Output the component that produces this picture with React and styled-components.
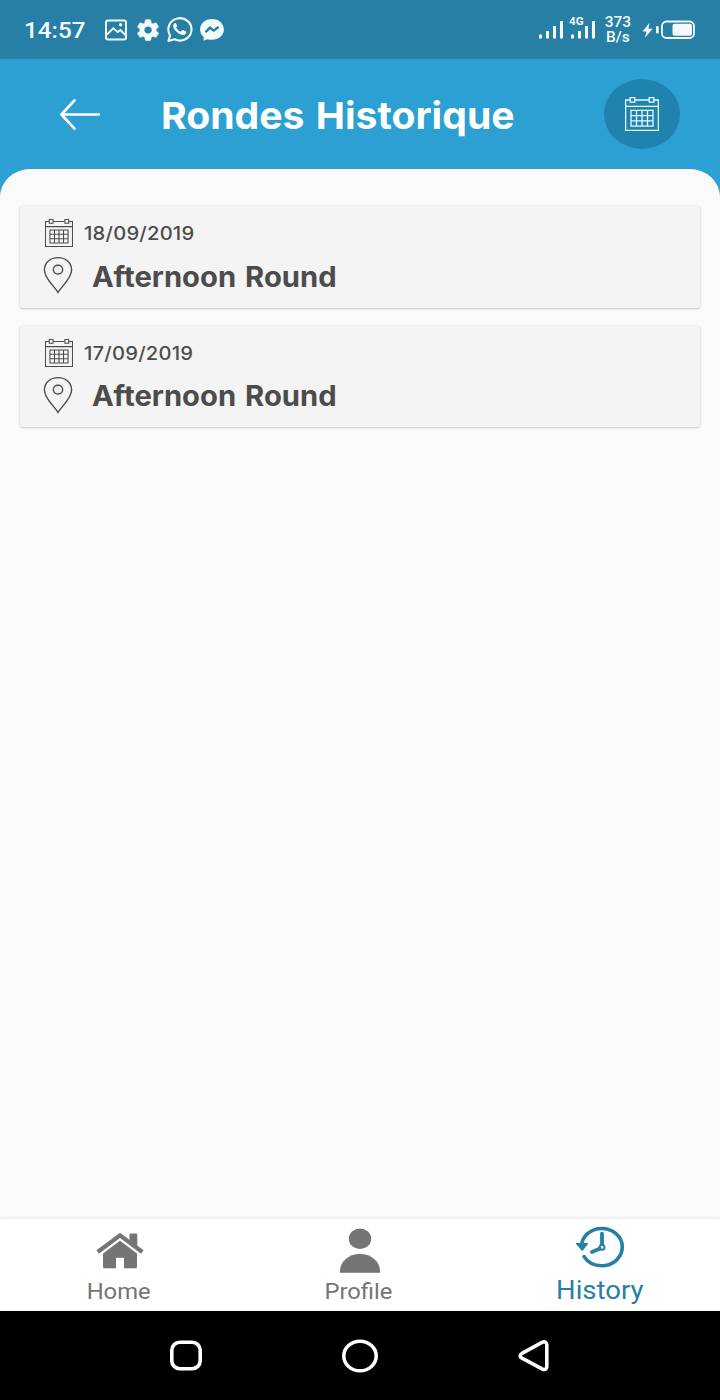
import React from "react";
import styled, { createGlobalStyle } from "styled-components";

const GlobalStyle = createGlobalStyle`
  * {
    box-sizing: border-box;
  }
  body {
    margin: 0;
    background: #000;
  }
  svg {
    display: block;
    flex: none;
  }
`;

const Screen = styled.div`
  width: 720px;
  height: 1400px;
  display: flex;
  flex-direction: column;
  overflow: hidden;
  background: #2c9fd3;
  font-family: Inter, "Liberation Sans", sans-serif;
`;

const StatusBar = styled.div`
  height: 59px;
  flex: none;
  display: flex;
  align-items: center;
  justify-content: space-between;
  padding: 0 24px 0 24px;
  background: #277fa6;
  color: #f4fbfd;
  font-family: Roboto, sans-serif;
`;

const StatusGroup = styled.div`
  display: flex;
  align-items: center;
`;

const Wide = styled.span`
  display: inline-block;
  white-space: nowrap;
  transform: scaleX(${(p) => p.$x || 1});
  transform-origin: ${(p) => p.$origin || "left"} center;
`;

const Clock = styled.div`
  width: 80px;
  font-size: 22px;
  font-weight: 500;
  line-height: 28px;
  padding-top: 2px;
`;

const Speed = styled.div`
  width: 28px;
  margin: 1px 10px 0 9px;
  text-align: center;
  font-size: 14px;
  font-weight: 500;
  line-height: 15px;
`;

const Header = styled.header`
  height: 110px;
  flex: none;
  display: flex;
  align-items: center;
  padding: 0 40px 0 58px;
`;

const Title = styled.h1`
  flex: 1;
  margin: 0;
  padding: 3px 0 0 59px;
  color: #fff;
  font-size: 37.5px;
  font-weight: 700;
  line-height: 46px;
  word-spacing: 2px;
`;

const RoundButton = styled.button`
  width: 76px;
  height: 70px;
  padding: 0;
  border: none;
  border-radius: 50%;
  display: flex;
  align-items: center;
  justify-content: center;
  background: #2083af;
  color: #e9fbff;
`;

const Sheet = styled.main`
  flex: 1;
  display: flex;
  flex-direction: column;
  gap: 18px;
  padding: 37px 20px 0;
  background: #fafafa;
  border-radius: 30px 30px 0 0 / 28px 28px 0 0;
`;

const Card = styled.article`
  height: 101.5px;
  padding: 12px 23px 0;
  border-radius: 3px;
  background: #f4f4f4;
  box-shadow: 0 1px 2px rgba(0, 0, 0, 0.14), 0 0 3px rgba(0, 0, 0, 0.12);
  color: #4c4c4c;
`;

const CardRow = styled.div`
  display: flex;
  align-items: center;
  height: ${(p) => p.$height};
`;

const CardCalendar = styled.div`
  padding-left: 2px;
`;

const DateText = styled.div`
  margin-left: 11px;
  font-size: 18.5px;
  font-weight: 500;
  letter-spacing: 0.2px;
  line-height: 28px;
`;

const RoundName = styled.div`
  margin-left: 19px;
  padding-top: 3px;
  font-size: 28px;
  font-weight: 700;
  line-height: 34px;
  word-spacing: 2px;
`;

const TabBar = styled.nav`
  height: 92px;
  flex: none;
  display: grid;
  grid-template-columns: repeat(3, 1fr);
  background: #fff;
  box-shadow: 0 -1px 3px rgba(0, 0, 0, 0.08);
  font-family: Roboto, sans-serif;
`;

const Tab = styled.div`
  display: flex;
  flex-direction: column;
  align-items: center;
  padding-top: 6px;
  color: ${(p) => (p.$active ? "#277fa6" : "#757575")};
`;

const TabLabel = styled.div`
  font-size: ${(p) => (p.$active ? "25px" : "22px")};
  line-height: 30px;
  margin-top: ${(p) => (p.$active ? "5px" : "4px")};
  margin-right: ${(p) => (p.$active ? "0" : "2.5px")};
`;

const SystemBar = styled.div`
  height: 89px;
  flex: none;
  display: grid;
  grid-template-columns: repeat(3, 174px);
  justify-content: center;
  justify-items: center;
  align-items: center;
  background: #000;
`;

function CalendarIcon({ width, height, stroke }) {
  return (
    <svg
      width={width}
      height={height}
      viewBox="0 0 34 34"
      preserveAspectRatio="none"
      fill="none"
      stroke="currentColor"
      strokeWidth={stroke}
    >
      <path d="M5 3H.6v30.4h32.8V3H29M10 3h14M.6 9.3h32.8" />
      <path d="M5.2.6h4.6v4.6H5.2zM24.2.6h4.6v4.6h-4.6z" />
      <path d="M6 13.3h22v15.9H6zM6 18.6h22M6 23.9h22M11.5 13.3v15.9M17 13.3v15.9M22.5 13.3v15.9" />
    </svg>
  );
}

function PinIcon() {
  return (
    <svg width="30" height="38" viewBox="0 0 30 38" fill="none" stroke="currentColor" strokeWidth="1.4">
      <path d="M15 36.5C12.5 31.5 1.4 22.5 1.4 14.2C1.4 6.7 7.5 1.6 15 1.6S28.6 6.7 28.6 14.2C28.6 22.5 17.5 31.5 15 36.5z" />
      <ellipse cx="15" cy="13.6" rx="4.7" ry="4.4" />
    </svg>
  );
}

function BackIcon() {
  return (
    <svg width="44" height="34" viewBox="0 0 44 34" fill="none" stroke="#fff" strokeWidth="2.6" strokeLinecap="round" strokeLinejoin="round">
      <path d="M40.8 17.500H3.600M16.500 3.300L3.400 17.500l13.100 14.200" />
    </svg>
  );
}

function NotificationIcons() {
  return (
    <svg width="122" height="30" viewBox="104 15 122 30" fill="none" stroke="currentColor">
      <rect x="106" y="20.5" width="20" height="19" rx="2" strokeWidth="2" />
      <path d="M107 34.5l6.300-6.300 4.500 3.900 2.600-2.100 5 5" strokeWidth="1.9" />
      <circle cx="120.6" cy="24.700" r="1.7" fill="currentColor" stroke="none" />
      <g transform="translate(134.600 17.100) scale(1.120 1.080)" fill="currentColor" stroke="currentColor" strokeWidth=".6">
        <path d="M19.140 12.940c.04-.3.060-.61.060-.94s-.02-.64-.07-.94l2.030-1.580a.49.49 0 0 0 .12-.61l-1.920-3.320a.488.488 0 0 0-.59-.22l-2.390.96c-.5-.38-1.030-.7-1.620-.94l-.36-2.540a.484.484 0 0 0-.48-.41h-3.840c-.24 0-.43.17-.47.41l-.36 2.540c-.59.24-1.130.57-1.620.94l-2.390-.96c-.22-.08-.47 0-.59.22L2.740 8.870c-.12.21-.08.47.12.61l2.030 1.580c-.05.3-.09.63-.09.94s.02.64.07.94l-2.030 1.580a.49.49 0 0 0-.12.61l1.920 3.320c.12.22.37.29.59.22l2.390-.96c.5.38 1.030.7 1.620.94l.36 2.540c.05.24.24.41.48.41h3.840c.24 0 .44-.17.47-.41l.36-2.540c.59-.24 1.130-.56 1.620-.94l2.390.96c.22.08.47 0 .59-.22l1.920-3.320c.12-.22.070-.47-.12-.61l-2.010-1.580zM12 15.600c-1.980 0-3.600-1.620-3.600-3.600s1.620-3.600 3.600-3.600 3.600 1.620 3.600 3.600-1.620 3.600-3.600 3.600z" />
      </g>
      <path d="M168.400 41l1.700-5.700a11.600 11.200 0 1 1 4.500 4z" strokeWidth="2.1" strokeLinejoin="round" />
      <path d="M175.900 23.300c-.5-.4-1.200-.2-1.600.2-2 2-.9 4.700.8 6.800 2 2.500 4.800 4.700 7.900 4.800 1.800 0 3.300-1.100 3.300-2.900 0-.5-.3-.7-.7-.9l-2.600-1.200c-.5-.2-.8-.1-1.100.3l-1.100 1.300c-2.100-.8-3.700-2.200-4.700-4.100l.9-1.200c.2-.3.2-.6.100-.9z" fill="currentColor" stroke="none" />
      <path d="M212 19c-6.800 0-11.900 4.600-11.900 10.500 0 3.200 1.400 5.800 3.600 7.600v3.600l3.800-1.500c1.400.4 2.900.6 4.500.6 6.800 0 11.900-4.500 11.900-10.300S218.800 19 212 19z" fill="currentColor" stroke="none" />
      <path d="M205.600 32.200l4.400-4.500 3.600 2.900 5-3.600" stroke="#277fa6" strokeWidth="2.4" />
    </svg>
  );
}

const PixelLabel = styled.text`
  font-family: Roboto, sans-serif;
  font-size: 11px;
  font-weight: 700;
`;

function SignalIcons() {
  return (
    <svg width="57" height="30" viewBox="538 15 57 30" fill="currentColor">
      <rect x="539" y="34.500" width="3" height="4" rx=".5" />
      <rect x="546" y="31" width="3" height="7.500" rx=".5" />
      <rect x="553" y="26" width="3" height="12.500" rx=".5" />
      <rect x="560" y="21" width="3" height="17.500" rx=".5" />
      <rect x="571" y="34.500" width="3" height="4" rx=".5" />
      <rect x="578" y="31" width="3" height="7.500" rx=".5" />
      <rect x="585" y="26" width="3" height="12.500" rx=".5" />
      <rect x="592" y="21" width="3" height="17.500" rx=".5" />
      <PixelLabel x="569" y="25" textLength="14.500" lengthAdjust="spacingAndGlyphs">
        4G
      </PixelLabel>
    </svg>
  );
}

function BatteryIcon() {
  return (
    <svg width="54" height="24" viewBox="642 17.500 54 24">
      <path d="M649.500 22.500l-7 8.500h4l-1.600 6.300 7.700-9.100h-4.200z" fill="currentColor" />
      <rect x="656" y="25.500" width="2.700" height="7.500" rx="1.200" fill="currentColor" />
      <rect x="662" y="21" width="32" height="16.500" rx="4.500" fill="none" stroke="currentColor" strokeWidth="1.800" />
      <rect x="672.500" y="23.300" width="19.500" height="12" rx="2" fill="currentColor" />
    </svg>
  );
}

function HomeIcon() {
  return (
    <svg width="50" height="48" viewBox="95 1225 50 48" fill="currentColor">
      <path d="M97.700 1252L120 1235.400l22.300 16.600" fill="none" stroke="currentColor" strokeWidth="4.200" />
      <path d="M129.500 1234.500a1 1 0 0 1 1-1h5.800a1 1 0 0 1 1 1v12l-7.800-5.700z" />
      <path d="M120 1240.800l17 12.700v13.200a1.500 1.500 0 0 1-1.500 1.500H124v-10.400h-8v10.400h-11.500a1.500 1.500 0 0 1-1.500-1.500v-13.200z" />
    </svg>
  );
}

function ProfileIcon() {
  return (
    <svg width="50" height="48" viewBox="335 1225 50 48" fill="currentColor">
      <ellipse cx="360" cy="1238.800" rx="11.200" ry="10.300" />
      <path d="M340 1272.800v-1.500c0-9.800 8.500-17.300 20-17.300s20 7.500 20 17.300v1.500z" />
    </svg>
  );
}

function HistoryIcon() {
  return (
    <svg width="50" height="46" viewBox="575 1225 50 46" fill="none" stroke="currentColor">
      <path d="M581.500 1246c.3-9.500 9-17.500 20.100-17.500 11.500 0 20.700 8.200 20.700 18.600s-9.200 18.600-20.700 18.600c-7.700 0-14.100-3.700-17.500-9.100" strokeWidth="3.600" strokeLinecap="round" />
      <path d="M576.800 1243.700h10.400l-5 6.200z" fill="currentColor" strokeWidth="1.600" strokeLinejoin="round" />
      <path d="M602 1233.600v10.600M599.500 1248.700l-7.500 3.200" strokeWidth="3.800" strokeLinecap="round" />
      <circle cx="602" cy="1247.200" r="2.500" strokeWidth="2" />
    </svg>
  );
}

const rounds = [
  { date: "18/09/2019", name: "Afternoon Round" },
  { date: "17/09/2019", name: "Afternoon Round" },
];

const tabs = [
  { label: "Home", Icon: HomeIcon },
  { label: "Profile", Icon: ProfileIcon },
  { label: "History", Icon: HistoryIcon, active: true },
];

export function App() {
  return (
    <Screen>
      <GlobalStyle />
      <StatusBar>
        <StatusGroup>
          <Clock>
            <Wide $x={1.1}>14:57</Wide>
          </Clock>
          <NotificationIcons />
        </StatusGroup>
        <StatusGroup>
          <SignalIcons />
          <Speed>
            <Wide $x={1.1} $origin="center">373</Wide>
            <Wide $x={1.1} $origin="center">B/s</Wide>
          </Speed>
          <BatteryIcon />
        </StatusGroup>
      </StatusBar>
      <Header>
        <BackIcon />
        <Title>
          <Wide $x={1.043}>Rondes Historique</Wide>
        </Title>
        <RoundButton>
          <CalendarIcon width={34} height={34} stroke={1.3} />
        </RoundButton>
      </Header>
      <Sheet>
        {rounds.map((round) => (
          <Card key={round.date}>
            <CardRow $height="30px">
              <CardCalendar>
                <CalendarIcon width={28} height={28} stroke={1.3} />
              </CardCalendar>
              <DateText>
                <Wide $x={1.09}>{round.date}</Wide>
              </DateText>
            </CardRow>
            <CardRow $height="54px">
              <PinIcon />
              <RoundName>
                <Wide $x={1.043}>{round.name}</Wide>
              </RoundName>
            </CardRow>
          </Card>
        ))}
      </Sheet>
      <TabBar>
        {tabs.map(({ label, Icon, active }) => (
          <Tab key={label} $active={active}>
            <Icon />
            <TabLabel $active={active}>
              <Wide $x={active ? 1.1 : 1.08} $origin="center">{label}</Wide>
            </TabLabel>
          </Tab>
        ))}
      </TabBar>
      <SystemBar>
        <svg width="36" height="34" viewBox="0 0 36 34" fill="none" stroke="#fff" strokeWidth="3.6">
          <rect x="3.800" y="3.300" width="28.400" height="26.400" rx="8" />
        </svg>
        <svg width="38" height="36" viewBox="0 0 38 36" fill="none" stroke="#fff" strokeWidth="3.6">
          <ellipse cx="19" cy="18" rx="16.200" ry="14.800" />
        </svg>
        <svg width="36" height="36" viewBox="0 0 36 36" fill="none" stroke="#fff" strokeWidth="3.6">
          <path d="M5.500 15.700L26.500 4.200c2.200-1 4.300.3 4.300 2.500v22c0 2.200-2.100 3.500-4.300 2.500L5.500 19.900c-1.800-1-1.800-3.200 0-4.200z" />
        </svg>
      </SystemBar>
    </Screen>
  );
}

export default App;
